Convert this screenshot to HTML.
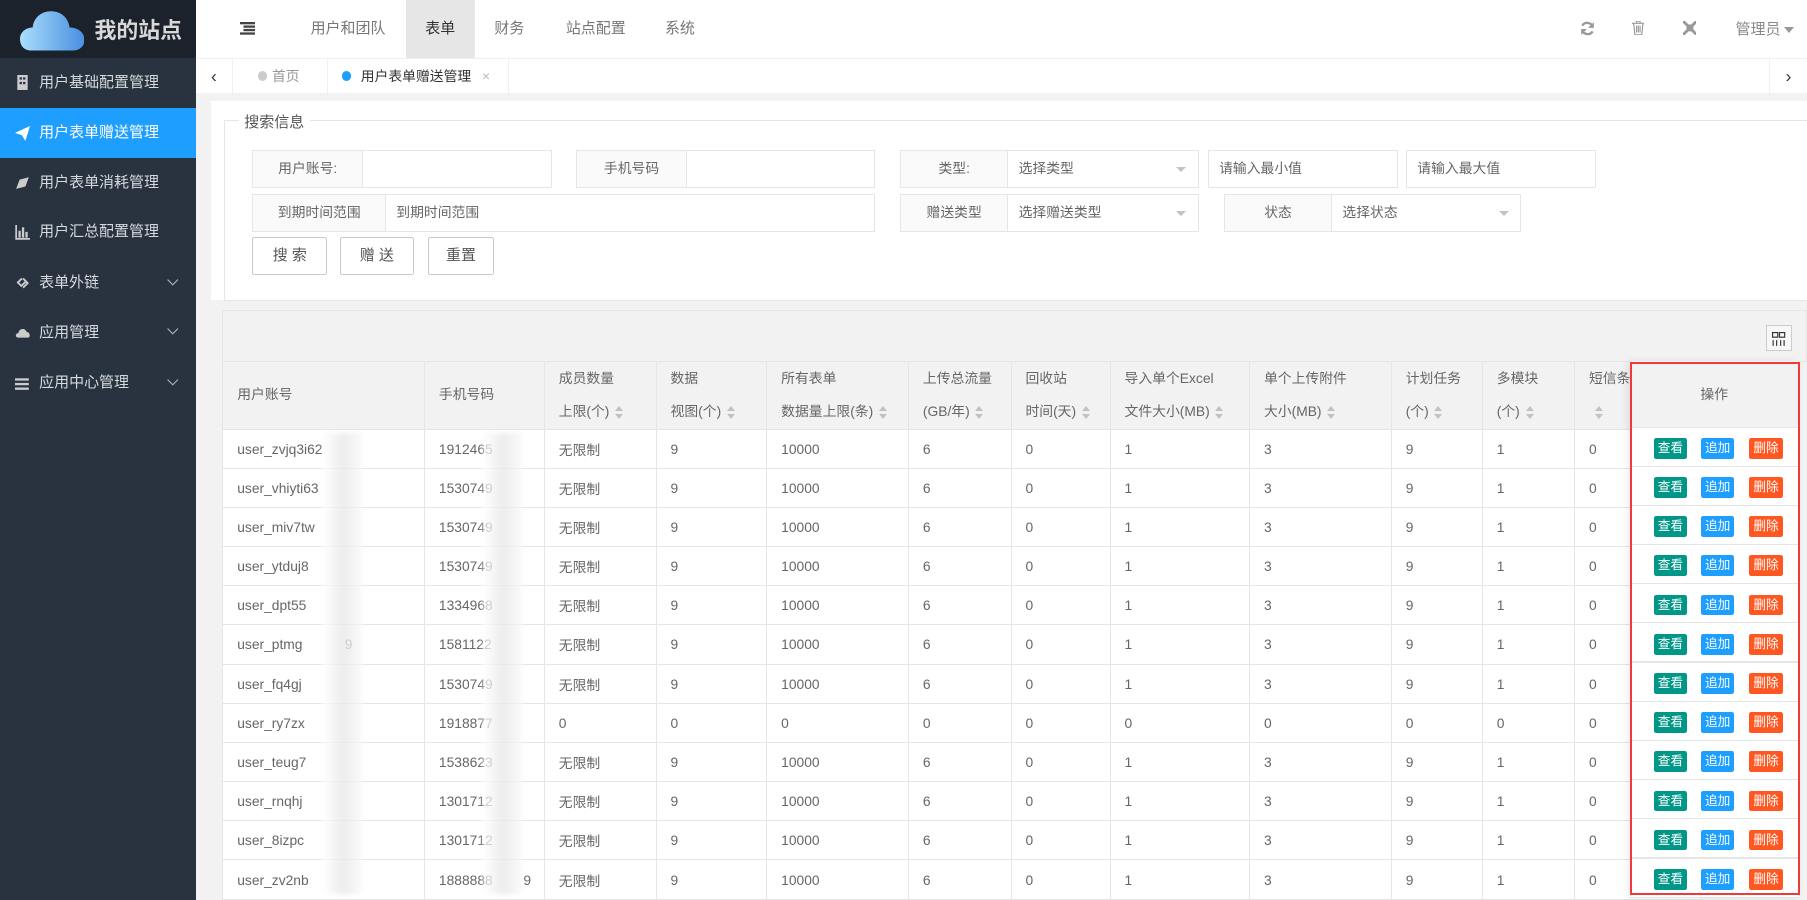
<!DOCTYPE html>
<html><head><meta charset="utf-8">
<style>
html{zoom:1.15242}
*{box-sizing:border-box;margin:0;padding:0}
body{width:1568px;height:781px;overflow:hidden;position:relative;font-family:"Liberation Sans","Noto Sans CJK SC",sans-serif;font-size:13px;color:#555;background:#f2f2f2}
.a{position:absolute}
#side{left:0;top:0;width:170px;height:781px;background:#28333f}
#logo{left:0;top:0;width:170px;height:50px;background:#1c222b}
.mi{position:absolute;left:0;width:170px;height:43px;line-height:43px;color:#d6d9dd;font-size:13px;padding-left:34px}
.mi svg{position:absolute;left:13px;top:15px}
.mi svg.ch{left:145px;top:18px}
#top{left:170px;top:0;width:1398px;height:50px;background:#fff}
.nv{position:absolute;top:0;height:50px;line-height:50px;font-size:13px;color:#777;text-align:center}
#tabs{left:170px;top:50px;width:1398px;height:31px;background:#fff;border-top:1px solid #f0f0f0}
.tb{position:absolute;top:0;height:31px;line-height:31px;font-size:12px;border-right:1px solid #f0f0f0}
.lbl{position:absolute;height:33px;line-height:31px;border:1px solid #e6e6e6;background:#fafafa;text-align:center;color:#666;font-size:12px}
.inp{position:absolute;height:33px;line-height:31px;border:1px solid #e6e6e6;background:#fff;padding-left:9px;color:#666;font-size:12px}
.inp .tri{position:absolute;right:10px;top:14px;width:0;height:0;border-left:5px solid transparent;border-right:5px solid transparent;border-top:5px solid #c2c2c2}
.btn{position:absolute;top:206px;height:33px;line-height:31px;border:1px solid #c9c9c9;background:#fff;text-align:center;color:#555;font-size:13px;border-radius:2px}
table{border-collapse:collapse;position:absolute;left:193px;top:313px;table-layout:fixed}
td,th{border:1px solid #e6e6e6;font-weight:normal;text-align:left;padding-left:12px;font-size:12px;color:#666;white-space:nowrap;overflow:hidden}
th{background:#f2f2f2;height:58px;line-height:29px;vertical-align:middle}
td{height:34px;background:#fff}
.s{display:inline-block;width:8px;height:12px;vertical-align:middle;margin-left:5px;position:relative}
.s:before{content:"";position:absolute;left:0;top:0;border-left:4px solid transparent;border-right:4px solid transparent;border-bottom:5px solid #c2c2c2}
.s:after{content:"";position:absolute;left:0;top:7px;border-left:4px solid transparent;border-right:4px solid transparent;border-top:5px solid #c2c2c2}
#op{left:1414px;top:313px;width:147px;height:466px;background:#fff;box-shadow:-2px 0 6px rgba(0,0,0,.08)}
.ob{position:absolute;height:18px;line-height:18px;width:29px;font-size:11px;color:#fff;text-align:center;border-radius:2px}
.blur{position:absolute;width:34px;background:linear-gradient(90deg,rgba(255,255,255,.7),rgba(232,232,232,.8) 50%,rgba(248,248,248,.7));filter:blur(2px)}
</style></head><body>

<div id="side" class="a"></div>
<div id="logo" class="a">
<svg class="a" style="left:17px;top:8px" width="56" height="36" viewBox="0 0 56 36"><defs><linearGradient id="g" x1="0" x2="1"><stop offset="0" stop-color="#a9defc"/><stop offset="1" stop-color="#4a8fe0"/></linearGradient></defs><path d="M10 36 C2 36 0 30 0 26 C0 20 5 16 11 16 C12 7 19 2 27 2 C36 2 42 8 43 16 C50 16 56 20 56 27 C56 32 52 36 46 36 Z" fill="url(#g)"/></svg>
<div class="a" style="left:82px;top:12px;font-size:19px;font-weight:bold;color:#d8d8d8">我的站点</div>
</div>

<div class="mi" style="top:50px;">用户基础配置管理<svg width="12" height="13"><rect x="2" y="0" width="9" height="13" fill="#ccc"/><rect x="4" y="2" width="2" height="2" fill="#28333f"/><rect x="7" y="2" width="2" height="2" fill="#28333f"/><rect x="4" y="6" width="2" height="2" fill="#28333f"/><rect x="7" y="6" width="2" height="2" fill="#28333f"/></svg></div>
<div class="mi" style="top:94px;background:#1e9fff;color:#fff">用户表单赠送管理<svg width="13" height="13"><path d="M0 6 L13 0 L9 13 L6 8 Z" fill="#fff"/></svg></div>
<div class="mi" style="top:137px;">用户表单消耗管理<svg width="13" height="13"><path d="M1 12 L4 4 L12 2 L9 10 Z" fill="#ccc"/></svg></div>
<div class="mi" style="top:180px;">用户汇总配置管理<svg width="13" height="13"><path d="M1 0V12H13" stroke="#ccc" fill="none" stroke-width="1.5"/><rect x="3" y="5" width="2" height="6" fill="#ccc"/><rect x="6" y="2" width="2" height="9" fill="#ccc"/><rect x="9" y="6" width="2" height="5" fill="#ccc"/></svg></div>
<div class="mi" style="top:224px;">表单外链<svg width="13" height="13"><path d="M2 7 L6 3 M5 10 L9 6 M7 3 L11 7 L7 11 M6 10 L2 6" stroke="#ccc" fill="none" stroke-width="1.6"/></svg><svg class="ch" width="10" height="6"><path d="M0.5 0.5L5 5L9.5 0.5" stroke="#aab" fill="none"/></svg></div>
<div class="mi" style="top:267px;">应用管理<svg width="14" height="13"><path d="M3 11 C0 11 0 7 3 7 C3 3 9 2 10 6 C13 6 14 11 11 11 Z" fill="#ccc"/></svg><svg class="ch" width="10" height="6"><path d="M0.5 0.5L5 5L9.5 0.5" stroke="#aab" fill="none"/></svg></div>
<div class="mi" style="top:311px;">应用中心管理<svg width="13" height="13"><rect x="0" y="2" width="12" height="2" fill="#ccc"/><rect x="0" y="6" width="12" height="2" fill="#ccc"/><rect x="0" y="10" width="12" height="2" fill="#ccc"/></svg><svg class="ch" width="10" height="6"><path d="M0.5 0.5L5 5L9.5 0.5" stroke="#aab" fill="none"/></svg></div>

<div id="top" class="a">
<svg class="a" style="left:38px;top:19px" width="13" height="11"><rect x="0" y="0" width="13" height="2" fill="#444"/><rect x="3" y="3" width="10" height="2" fill="#444"/><rect x="3" y="6" width="10" height="2" fill="#444"/><rect x="0" y="9" width="13" height="2" fill="#444"/></svg>
<div class="nv" style="left:92px;width:80px">用户和团队</div>
<div class="nv" style="left:182px;width:60px;background:#e6e6e6;color:#333">表单</div>
<div class="nv" style="left:252px;width:40px">财务</div>
<div class="nv" style="left:312px;width:70px">站点配置</div>
<div class="nv" style="left:400px;width:40px">系统</div>
<svg class="a" style="left:1201px;top:18px" width="13" height="13" viewBox="0 0 13 13"><path d="M11 5A5 5 0 0 0 2 4M2 8A5 5 0 0 0 11 9" stroke="#999" stroke-width="2" fill="none"/><path d="M12 1V6H7Z M1 12V7H6Z" fill="#999"/></svg>
<svg class="a" style="left:1246px;top:18px" width="11" height="12"><path d="M0 2H11M4 2V0H7V2M1.5 2L2.5 12H8.5L9.5 2M4 4V10M5.5 4V10M7 4V10" stroke="#999" fill="none"/></svg>
<svg class="a" style="left:1290px;top:18px" width="12" height="12"><path d="M0 0L12 12M12 0L0 12" stroke="#999" stroke-width="2.5"/><rect x="3" y="3" width="6" height="6" fill="#999"/></svg>
<div class="a" style="left:1336px;top:16px;color:#888">管理员</div>
<div class="a" style="left:1378px;top:23px;border-left:5px solid transparent;border-right:5px solid transparent;border-top:6px solid #999"></div>
</div>

<div id="tabs" class="a">
<div class="tb" style="left:0;width:32px;text-align:center;color:#333;font-size:15px">‹</div>
<div class="tb" style="left:32px;width:83px;color:#999;padding-left:22px"><span style="display:inline-block;width:8px;height:8px;border-radius:4px;background:#ccc;margin-right:4px"></span>首页</div>
<div class="tb" style="left:115px;width:157px;color:#333;padding-left:12px"><span style="display:inline-block;width:8px;height:8px;border-radius:4px;background:#1e9fff;margin-right:8px"></span>用户表单赠送管理 <span style="color:#bbb;margin-left:6px">×</span></div>
<div class="tb" style="left:1365px;width:33px;text-align:center;color:#333;font-size:15px;border-left:1px solid #f0f0f0;border-right:none">›</div>
</div>

<div class="a" style="left:183px;top:88px;width:1385px;height:172px;background:#fff"></div>
<div class="a" style="left:194px;top:104px;width:1374px;height:157px;border:1px solid #e6e6e6;border-right:none"></div>
<div class="a" style="left:207px;top:96px;background:#fff;padding:0 5px;font-size:13px;color:#555">搜索信息</div>

<div class="lbl" style="left:219px;top:130px;width:96px">用户账号:</div><div class="inp" style="left:314px;top:130px;width:165px"></div>
<div class="lbl" style="left:500px;top:130px;width:96px">手机号码</div><div class="inp" style="left:595px;top:130px;width:164px"></div>
<div class="lbl" style="left:781px;top:130px;width:94px">类型:</div><div class="inp" style="left:874px;top:130px;width:166px">选择类型<span class="tri"></span></div>
<div class="inp" style="left:1048px;top:130px;width:165px">请输入最小值</div>
<div class="inp" style="left:1220px;top:130px;width:165px">请输入最大值</div>
<div class="lbl" style="left:219px;top:168px;width:116px">到期时间范围</div><div class="inp" style="left:334px;top:168px;width:425px">到期时间范围</div>
<div class="lbl" style="left:781px;top:168px;width:94px">赠送类型</div><div class="inp" style="left:874px;top:168px;width:166px">选择赠送类型<span class="tri"></span></div>
<div class="lbl" style="left:1062px;top:168px;width:94px">状态</div><div class="inp" style="left:1155px;top:168px;width:165px">选择状态<span class="tri"></span></div>
<div class="btn" style="left:219px;width:65px">搜 索</div>
<div class="btn" style="left:295px;width:64px">赠 送</div>
<div class="btn" style="left:371px;width:58px">重置</div>

<div class="a" style="left:193px;top:269px;width:1375px;height:45px;background:#f2f2f2;border:1px solid #e6e6e6"></div>
<div class="a" style="left:1532px;top:282px;width:23px;height:23px;border:1px solid #ccc;background:#f7f7f7">
<svg class="a" style="left:5px;top:5px" width="12" height="12"><rect x="0.5" y="0.5" width="4.5" height="4" stroke="#333" fill="none"/><rect x="6.5" y="0.5" width="4.5" height="4" stroke="#333" fill="none"/><path d="M1 7V12M4 7V12M7.5 7V12M10.5 7V12" stroke="#333"/></svg></div>

<table>
<colgroup><col style="width:175px"><col style="width:104px"><col style="width:97px"><col style="width:96px"><col style="width:123px"><col style="width:89px"><col style="width:86px"><col style="width:121px"><col style="width:123px"><col style="width:79px"><col style="width:80px"><col style="width:110px"></colgroup>
<tr><th>用户账号</th><th>手机号码</th><th>成员数量<br>上限(个)<i class="s"></i></th><th>数据<br>视图(个)<i class="s"></i></th><th>所有表单<br>数据量上限(条)<i class="s"></i></th><th>上传总流量<br>(GB/年)<i class="s"></i></th><th>回收站<br>时间(天)<i class="s"></i></th><th>导入单个Excel<br>文件大小(MB)<i class="s"></i></th><th>单个上传附件<br>大小(MB)<i class="s"></i></th><th>计划任务<br>(个)<i class="s"></i></th><th>多模块<br>(个)<i class="s"></i></th><th>短信条<br><i class="s"></i></th></tr>
<tr><td>user_zvjq3i62</td><td>1912465</td><td>无限制</td><td>9</td><td>10000</td><td>6</td><td>0</td><td>1</td><td>3</td><td>9</td><td>1</td><td>0</td></tr>
<tr><td>user_vhiyti63</td><td>1530749</td><td>无限制</td><td>9</td><td>10000</td><td>6</td><td>0</td><td>1</td><td>3</td><td>9</td><td>1</td><td>0</td></tr>
<tr><td>user_miv7tw</td><td>1530749</td><td>无限制</td><td>9</td><td>10000</td><td>6</td><td>0</td><td>1</td><td>3</td><td>9</td><td>1</td><td>0</td></tr>
<tr><td>user_ytduj8</td><td>1530749</td><td>无限制</td><td>9</td><td>10000</td><td>6</td><td>0</td><td>1</td><td>3</td><td>9</td><td>1</td><td>0</td></tr>
<tr><td>user_dpt55</td><td>1334968</td><td>无限制</td><td>9</td><td>10000</td><td>6</td><td>0</td><td>1</td><td>3</td><td>9</td><td>1</td><td>0</td></tr>
<tr><td>user_ptmg&nbsp;&nbsp;&nbsp;&nbsp;&nbsp;&nbsp;&nbsp;&nbsp;&nbsp;&nbsp;&nbsp;9</td><td>1581122</td><td>无限制</td><td>9</td><td>10000</td><td>6</td><td>0</td><td>1</td><td>3</td><td>9</td><td>1</td><td>0</td></tr>
<tr><td>user_fq4gj</td><td>1530749</td><td>无限制</td><td>9</td><td>10000</td><td>6</td><td>0</td><td>1</td><td>3</td><td>9</td><td>1</td><td>0</td></tr>
<tr><td>user_ry7zx</td><td>1918877</td><td>0</td><td>0</td><td>0</td><td>0</td><td>0</td><td>0</td><td>0</td><td>0</td><td>0</td><td>0</td></tr>
<tr><td>user_teug7</td><td>1538623</td><td>无限制</td><td>9</td><td>10000</td><td>6</td><td>0</td><td>1</td><td>3</td><td>9</td><td>1</td><td>0</td></tr>
<tr><td>user_rnqhj</td><td>1301712</td><td>无限制</td><td>9</td><td>10000</td><td>6</td><td>0</td><td>1</td><td>3</td><td>9</td><td>1</td><td>0</td></tr>
<tr><td>user_8izpc</td><td>1301712</td><td>无限制</td><td>9</td><td>10000</td><td>6</td><td>0</td><td>1</td><td>3</td><td>9</td><td>1</td><td>0</td></tr>
<tr><td>user_zv2nb</td><td>1888888&nbsp;&nbsp;&nbsp;&nbsp;&nbsp;&nbsp;&nbsp;&nbsp;9</td><td>无限制</td><td>9</td><td>10000</td><td>6</td><td>0</td><td>1</td><td>3</td><td>9</td><td>1</td><td>0</td></tr>
</table>

<div class="blur" style="left:280px;top:376px;height:400px"></div>
<div class="blur" style="left:419px;top:376px;height:400px"></div>

<div id="op" class="a">
<div class="a" style="left:0;top:0;width:147px;height:58px;background:#f2f2f2;border-bottom:1px solid #e6e6e6;text-align:center;line-height:58px;font-size:12px;color:#666">操作</div>
</div>
<div id="opb"></div>
<div class="a" style="left:1414px;top:314px;width:148px;height:463px;border:2px solid #f03a3a"></div>

<script>
var h='';for(var i=0;i<12;i++){var y=380+i*34;
h+='<div class="a" style="left:1414px;top:'+(371+i*34+33)+'px;width:147px;height:1px;background:#e6e6e6"></div>';
h+='<div class="ob" style="left:1435px;top:'+y+'px;background:#009688">查看</div><div class="ob" style="left:1476px;top:'+y+'px;background:#1e9fff">追加</div><div class="ob" style="left:1518px;top:'+y+'px;background:#ff5722">删除</div>';}
document.getElementById('opb').innerHTML=h;
</script>
</body></html>
